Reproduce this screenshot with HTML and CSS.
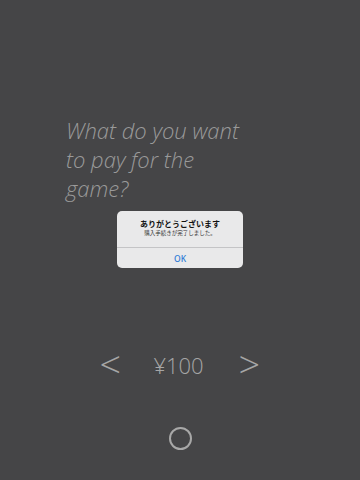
FILE: index.html
```html
<!DOCTYPE html>
<html lang="ja">
<head>
<meta charset="utf-8">
<link rel="stylesheet" href="styles.css">
</head>
<body>
<main class="screen">
  <h1 class="question">What do you want<br>to pay for the<br>game?</h1>
  <div class="picker">
    <span class="arrow">&lt;</span>
    <span class="price">¥100</span>
    <span class="arrow">&gt;</span>
  </div>
  <div class="home"><span class="ring"></span></div>
</main>
<div class="alert">
  <div class="alert-body">
    <div class="alert-title">ありがとうございます</div>
    <div class="alert-msg">購入手続きが完了しました。</div>
  </div>
  <div class="alert-btn">OK</div>
</div>
</body>
</html>
```
FILE: styles.css
```css
html, body {
  margin: 0;
  padding: 0;
  background: #454547;
  width: 360px;
  height: 480px;
  overflow: hidden;
}
.screen {
  display: flex;
  flex-direction: column;
  height: 480px;
  box-sizing: border-box;
  padding: 116px 0 0 0;
}
.question {
  margin: 0 0 0 66px;
  font-family: "Open Sans", "Lato", sans-serif;
  font-style: italic;
  font-weight: 300;
  font-size: 22px;
  line-height: 29px;
  color: #9a9a9a;
  letter-spacing: 0;
}
.picker {
  margin-top: 147px;
  display: flex;
  align-items: center;
  justify-content: space-between;
  padding: 0 100px 0 100px;
  height: 30px;
  font-family: "Open Sans", "Lato", sans-serif;
  font-weight: 300;
  color: #a6a6a6;
}
.arrow {
  font-size: 36px;
  line-height: 30px;
  transform: scaleX(1.05);
}
.price {
  font-size: 22px;
  line-height: 30px;
  padding-right: 3px;
}
.home {
  margin-top: 47px;
  display: flex;
  justify-content: center;
}
.ring {
  width: 19px;
  height: 19px;
  border: 2px solid #a8a8a8;
  border-radius: 50%;
}
.alert {
  position: absolute;
  left: 117px;
  top: 211px;
  width: 126px;
  height: 57px;
  background: #e9e9ea;
  border-radius: 5px;
  display: flex;
  flex-direction: column;
  font-family: "Noto Sans CJK JP", sans-serif;
  text-align: center;
  overflow: hidden;
}
.alert-body {
  height: 37px;
  box-sizing: border-box;
  padding-top: 7px;
  border-bottom: 1px solid #c4c4c6;
}
.alert-title {
  font-size: 8px;
  font-weight: 700;
  line-height: 11px;
  color: #111;
}
.alert-msg {
  font-size: 5.5px;
  line-height: 8px;
  color: #333;
}
.alert-btn {
  flex: 1;
  display: flex;
  align-items: center;
  justify-content: center;
  font-family: "Noto Sans", sans-serif;
  font-weight: 500;
  font-size: 8.5px;
  color: #2e7bd6;
}
```
